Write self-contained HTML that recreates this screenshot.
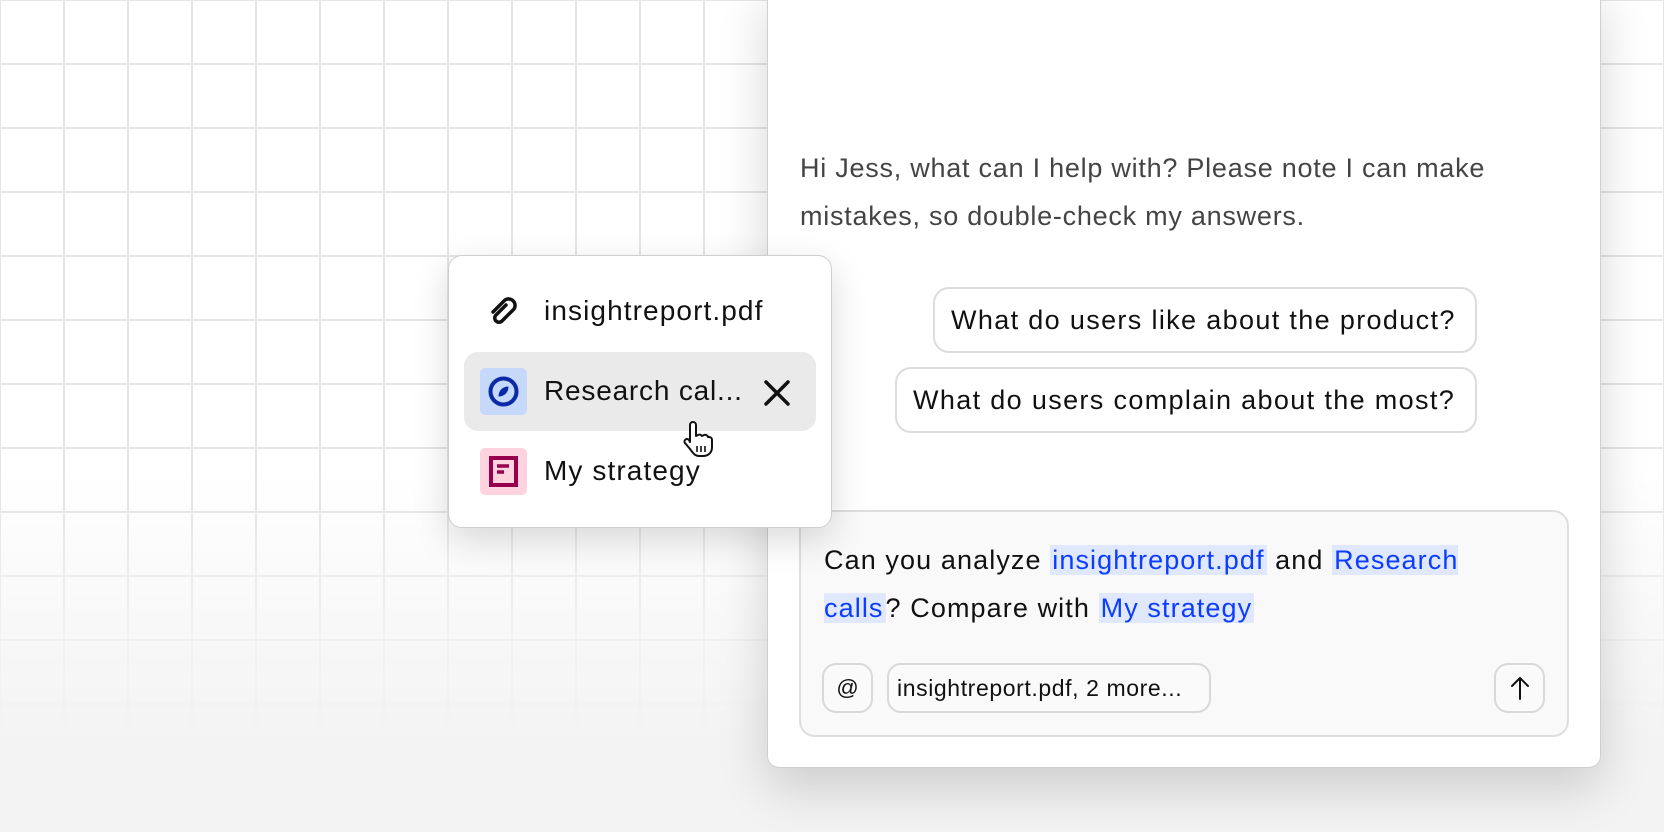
<!DOCTYPE html>
<html><head><meta charset="utf-8"><style>
*{box-sizing:border-box;margin:0;padding:0}
html,body{width:1664px;height:832px;overflow:hidden}
body{position:relative;font-family:"Liberation Sans",sans-serif;background:linear-gradient(#fff 0,#fff 470px,#f3f3f3 740px,#f3f3f3 100%)}
.grid{position:absolute;left:0;top:0;width:1664px;height:740px;
background-image:linear-gradient(to right,#e6e6e6 2px,transparent 2px),linear-gradient(to bottom,#e6e6e6 2px,transparent 2px);
background-size:64px 64px;background-position:-1px -1px;
-webkit-mask-image:linear-gradient(#000 0,#000 500px,transparent 735px);mask-image:linear-gradient(#000 0,#000 500px,transparent 735px)}
.panel{position:absolute;left:767px;top:-20px;width:834px;height:788px;background:#fff;border:1px solid #cfcfcf;border-radius:12px;box-shadow:0 20px 50px rgba(0,0,0,.16)}
.greet{position:absolute;left:800px;top:144px;width:720px;font-size:27px;letter-spacing:.75px;line-height:48px;color:#444}
.chip{position:absolute;height:66px;border:2px solid #dcdcdc;border-radius:16px;background:#fff;font-size:27px;letter-spacing:1.35px;color:#111;display:flex;align-items:center;padding-left:16px;white-space:nowrap}
.input{position:absolute;left:799px;top:510px;width:770px;height:227px;background:#f9f9f9;border:2px solid #dedede;border-radius:16px}
.itext{position:absolute;left:824px;top:536px;width:660px;font-size:27px;letter-spacing:1.1px;line-height:48px;color:#111}
.m{background:#dfe8fd;color:#0b3cff;padding:0 2px}
.btn{position:absolute;top:663px;height:50px;border:2px solid #d8d8d8;border-radius:14px;background:#fafafa;display:flex;align-items:center;justify-content:center;font-size:22px;color:#111}
.pop{position:absolute;left:448px;top:255px;width:384px;height:273px;background:#fff;border:1px solid #cfcfcf;border-radius:14px;box-shadow:0 12px 36px rgba(0,0,0,.15)}
.row{position:absolute;font-size:28px;letter-spacing:1.1px;color:#111;white-space:nowrap}
</style></head><body>
<div class="grid"></div>
<div class="panel"></div>
<div class="greet">Hi Jess, what can I help with? Please note I can make mistakes, so double-check my answers.</div>
<div class="chip" style="left:933px;top:287px;width:544px">What do users like about the product?</div>
<div class="chip" style="left:895px;top:367px;width:582px">What do users complain about the most?</div>
<div class="input"></div>
<div class="itext">Can you analyze <span class="m">insightreport.pdf</span> and <span class="m">Research calls</span>? Compare with <span class="m">My strategy</span></div>
<div class="btn" style="left:822px;width:51px">@</div>
<div class="btn" style="left:887px;width:324px;font-size:23px;letter-spacing:.6px;justify-content:flex-start;padding-left:8px">insightreport.pdf, 2 more...</div>
<div class="btn" style="left:1494px;width:51px"><svg width="22" height="26" viewBox="0 0 22 26"><path d="M11 24V3M3 11l8-8 8 8" fill="none" stroke="#111" stroke-width="2" stroke-linecap="round" stroke-linejoin="round"/></svg></div>
<div class="pop"></div>
<svg style="position:absolute;left:487px;top:296px" width="34" height="34" viewBox="0 0 34 34"><path d="M19 9l-10 10a4 4 0 0 0 6 6l12-12a6.5 6.5 0 0 0-9-9L6 16" fill="none" stroke="#111" stroke-width="3.5" stroke-linecap="round"/></svg>
<div class="row" style="left:544px;top:295px">insightreport.pdf</div>
<div style="position:absolute;left:464px;top:352px;width:352px;height:79px;background:#eaeaea;border-radius:14px"></div>
<div style="position:absolute;left:480px;top:368px;width:47px;height:47px;background:#c6d9fb;border-radius:5px"></div>
<svg style="position:absolute;left:480px;top:368px" width="47" height="47" viewBox="0 0 47 47"><circle cx="23.5" cy="23.5" r="13" fill="none" stroke="#0a2aa8" stroke-width="4"/><path d="M18.5 28.5c0-6 4-10 10-10 0 6-4 10-10 10z" fill="#0a2aa8"/></svg>
<div class="row" style="left:544px;top:375px;letter-spacing:.8px">Research cal...</div>
<svg style="position:absolute;left:763px;top:379px" width="28" height="28" viewBox="0 0 28 28"><path d="M3 3l22 22M25 3L3 25" stroke="#111" stroke-width="3.5" stroke-linecap="round"/></svg>
<div style="position:absolute;left:480px;top:448px;width:47px;height:47px;background:#fcd3de;border-radius:5px"></div>
<svg style="position:absolute;left:480px;top:448px" width="47" height="47" viewBox="0 0 47 47"><rect x="11" y="10" width="25" height="27" fill="none" stroke="#98004e" stroke-width="4"/><path d="M17 18h12M17 24h7" stroke="#98004e" stroke-width="3.5"/></svg>
<div class="row" style="left:544px;top:455px">My strategy</div>
<svg style="position:absolute;left:680px;top:420px" width="34" height="38" viewBox="0 0 34 38"><path d="M10 22V5a3 3 0 0 1 6 0v11l2-1a3 3 0 0 1 4 1l2-1a3 3 0 0 1 4 2l1 0a3 3 0 0 1 3 3v7c0 6-4 9-9 9h-4c-4 0-6-3-9-7l-5-6a2.5 2.5 0 0 1 4-3z" fill="#fff" stroke="#111" stroke-width="2" stroke-linejoin="round"/><path d="M17 26v6M21 26v6M25 26v6" stroke="#111" stroke-width="1.6"/></svg>
</body></html>
